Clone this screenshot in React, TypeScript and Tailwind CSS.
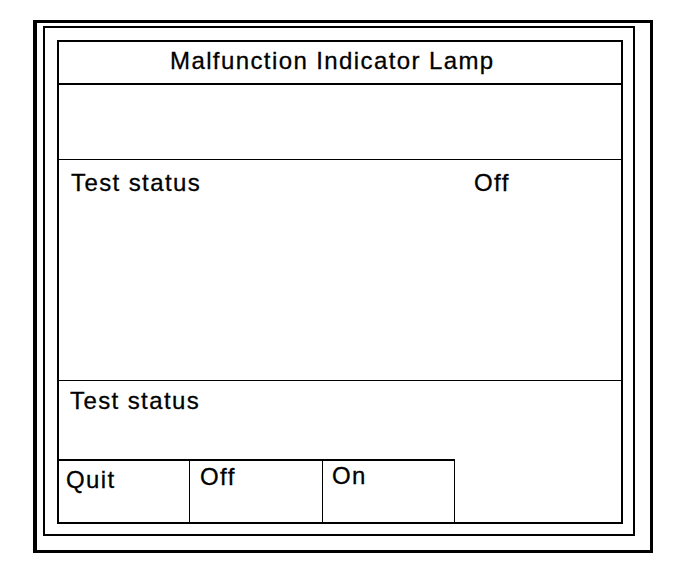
import React from "react";

export default function App() {
  const font = { fontFamily: '"Liberation Sans", Arial, sans-serif' };
  return (
    <div className="w-[688px] h-[570px] bg-white text-black" style={font}>
      <div className="pt-[20px] pl-[33px]">
        <div className="w-[620px] h-[533px] border-[3px] border-l-4 border-black pl-[6px] pt-[3px]">
          <div className="w-[592px] h-[510px] border-2 border-black pl-[12px] pt-[12px]">
            <div className="w-[566px] h-[484px] border-2 border-black flex flex-col text-[24px] leading-[24px] tracking-[1.4px] [-webkit-text-stroke:0.3px_black]">
              <div className="h-[43px] border-b-2 border-black pt-[7px] pl-[111px]">
                Malfunction Indicator Lamp
              </div>
              <div className="h-[75px] border-b border-black" />
              <div className="h-[221px] border-b border-black flex pt-[11px] pl-[12px]">
                <div className="w-[403px]">Test status</div>
                <div>Off</div>
              </div>
              <div className="h-[78px] pt-[8px] pl-[11px]">Test status</div>
              <div className="flex w-[396px] border-t-2 border-black h-[63px]">
                <div className="w-[131px] border-r border-black pt-[7px] pl-[7px]">Quit</div>
                <div className="w-[133px] border-r border-black pt-[4px] pl-[10px]">Off</div>
                <div className="w-[132px] border-r border-black pt-[3px] pl-[9px]">On</div>
              </div>
            </div>
          </div>
        </div>
      </div>
    </div>
  );
}
